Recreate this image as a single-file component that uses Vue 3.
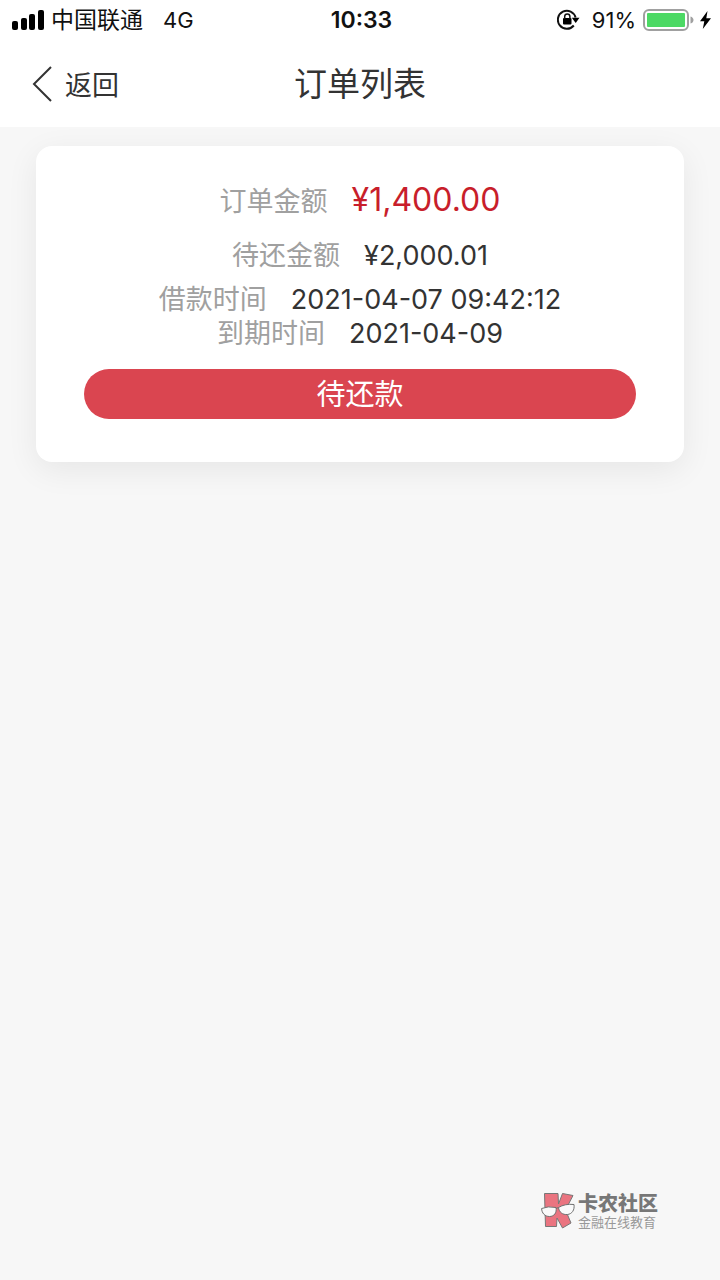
<script setup>
const bars = [
  { x: 0, h: 9 },
  { x: 9, h: 12 },
  { x: 17, h: 16 },
  { x: 26, h: 20 },
]
const rows = [
  { label: '订单金额', value: '¥1,400.00', kind: 'total' },
  { label: '待还金额', value: '¥2,000.01', kind: 'due' },
  { label: '借款时间', value: '2021-04-07 09:42:12', kind: 'date' },
  { label: '到期时间', value: '2021-04-09', kind: 'date' },
]
</script>

<template>
  <div class="page">
    <div class="status">
      <div class="status-left">
        <svg class="signal" width="32" height="20" viewBox="0 0 32 20" aria-hidden="true">
          <rect v-for="b in bars" :key="b.x" :x="b.x" :y="20 - b.h" width="6" :height="b.h" rx="2" />
        </svg>
        <span class="carrier">中国联通</span>
        <span>4G</span>
      </div>
      <span class="clock">10:33</span>
      <div class="status-right">
        <svg class="lock" width="23" height="22" viewBox="0 0 23 22" aria-hidden="true">
          <path d="M16.800 16.500A9 9 0 1 1 18.600 8.500" fill="none" stroke="#111" stroke-width="2" />
          <path d="M14.800 8.800H22.500L18.700 14Z" />
          <rect x="6" y="9" width="8.500" height="6.500" rx="1" />
          <path d="M7.700 10V7.500a2.600 2.600 0 0 1 5.200 0V10" fill="none" stroke="#111" stroke-width="1.500" />
        </svg>
        <span>91%</span>
        <svg class="battery" width="51" height="22" viewBox="0 0 51 22" aria-hidden="true">
          <rect x="1" y="1" width="44" height="20" rx="5" fill="#fff" stroke="#a0a0a0" stroke-width="2" />
          <rect x="4" y="4" width="38" height="14" rx="1" fill="#4cd964" />
          <path d="M47.500 7.500c4 1 4 6 0 7Z" fill="#a0a0a0" />
        </svg>
        <svg class="bolt" width="11" height="18" viewBox="0 0 11 18" aria-hidden="true">
          <path d="M7.500 0 0 10.200h4.300L2.800 18 11 7.200H6.300Z" />
        </svg>
      </div>
    </div>

    <header class="nav">
      <button class="back" type="button">
        <svg width="20" height="36" viewBox="0 0 20 36" aria-hidden="true">
          <path d="M19 1 2 18l17 17" fill="none" stroke="#333" stroke-width="2" />
        </svg>
        <span>返回</span>
      </button>
      <h1>订单列表</h1>
    </header>

    <main>
      <section class="card">
        <dl>
          <div v-for="r in rows" :key="r.label" class="row" :class="r.kind">
            <dt>{{ r.label }}</dt>
            <dd>{{ r.value }}</dd>
          </div>
        </dl>
        <button class="pay" type="button">待还款</button>
      </section>
    </main>

    <footer class="brand">
      <svg width="34" height="37" viewBox="0 0 34 37" aria-hidden="true">
        <path
          d="M3.500 1.500 17 1.500 17.500 12 21.500 1.500 32 3.500 24.500 18 30 31 21.500 36 16 26 15.500 34.500 4.500 34.500Z"
          fill="#ea7480" stroke="#777" stroke-width="1"
        />
        <g fill="#fafafa" stroke="#707070" stroke-width="1">
          <path d="M.600 16.500Q7 13.800 15 15.500c1 5.500-2 9-6.500 9-4.800 0-7.700-3.500-7.900-8Z" />
          <path d="M17.500 15.500Q24 11.500 33 12.500c.8 5.500-2 9.500-6.500 10-5 .500-8.500-2.500-9-7Z" />
          <path d="m15 16.500 2.500-1" fill="none" />
        </g>
      </svg>
      <div class="brand-text">
        <strong>卡农社区</strong>
        <span>金融在线教育</span>
      </div>
    </footer>
  </div>
</template>

<style>
body {
  background: #f7f7f7;
}
</style>

<style scoped>
.page {
  position: relative;
  min-height: 100vh;
  background: #f7f7f7;
  color: #333;
  font-family: Inter, "Noto Sans CJK SC", sans-serif;
}
.status {
  display: grid;
  grid-template-columns: 1fr auto 1fr;
  align-items: center;
  height: 40px;
  padding: 0 9px 0 12px;
  background: #fff;
  color: #111;
  font-size: 22px;
  line-height: 40px;
}
.status-left,
.status-right {
  display: flex;
  align-items: center;
}
.status-right {
  justify-content: flex-end;
}
.signal {
  margin-right: 7px;
}
.carrier {
  margin-right: 20px;
  font-size: 23px;
}
.clock {
  font-size: 23px;
  font-weight: 600;
}
.lock {
  margin-right: 12px;
}
.battery {
  margin: 0 6px 0 7px;
}
.nav {
  display: grid;
  grid-template-columns: 1fr auto 1fr;
  align-items: center;
  height: 87px;
  background: #fff;
}
.back {
  display: flex;
  align-items: center;
  justify-self: start;
  gap: 13px;
  margin-left: 32px;
  padding: 0;
  border: 0;
  background: none;
  color: #333;
  font: inherit;
  font-size: 27px;
  line-height: 36px;
}
.back span {
  padding-top: 4px;
}
h1 {
  margin: 0;
  font-size: 33px;
  font-weight: 400;
  line-height: 48px;
}
main {
  padding: 19px 36px;
}
.card {
  padding: 32px 48px 43px;
  border-radius: 16px;
  background: #fff;
  box-shadow: 0 8px 32px rgba(0, 0, 0, 0.07);
}
dl {
  margin: 0 0 18px;
}
.row {
  display: flex;
  justify-content: center;
  align-items: baseline;
  gap: 24px;
  font-size: 27px;
  line-height: 34px;
}
.total,
.due {
  line-height: 44px;
}
.total {
  margin-bottom: 10px;
}
.due {
  margin-bottom: 5px;
}
dt {
  color: #a0a0a0;
}
dd {
  margin: 0;
}
.total dd {
  color: #c81e2b;
  font-size: 32px;
}
.pay {
  display: block;
  width: 100%;
  height: 50px;
  padding: 2px 0 0;
  border: 0;
  border-radius: 25px;
  background: #da4550;
  color: #fff;
  font: inherit;
  font-size: 29px;
  line-height: 48px;
}
.brand {
  position: absolute;
  right: 62px;
  bottom: 51px;
  display: flex;
  align-items: center;
  gap: 3px;
  color: #777;
}
.brand-text {
  display: flex;
  flex-direction: column;
}
.brand strong {
  font-size: 20px;
  font-weight: 900;
  line-height: 22px;
}
.brand span {
  color: #999;
  font-size: 13px;
  line-height: 14px;
}
</style>
